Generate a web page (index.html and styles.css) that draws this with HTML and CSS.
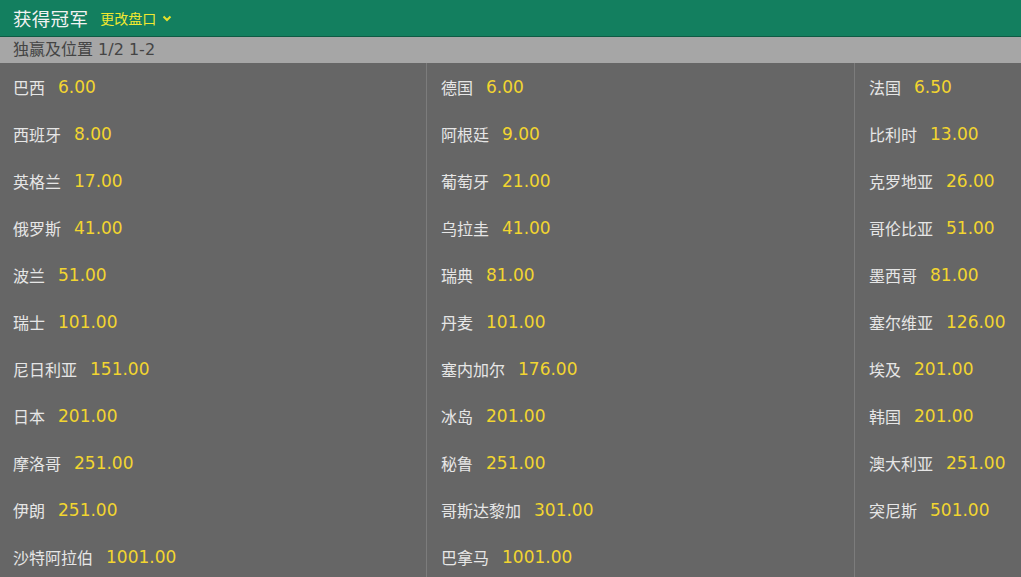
FILE: index.html
```html
<!DOCTYPE html>
<html lang="zh">
<head>
<meta charset="utf-8">
<link rel="stylesheet" href="styles.css">
</head>
<body>
<div class="header">
  <span class="title">获得冠军</span>
  <span class="change">更改盘口</span>
  <svg class="chev" width="10" height="7" viewBox="0 0 10 7"><path d="M1.5 1.5 L5 5 L8.5 1.5" fill="none" stroke="#e6e02a" stroke-width="2"/></svg>
</div>
<div class="sub">独赢及位置 1/2 1-2</div>
<div class="grid">
  <div class="col">
    <div class="row"><span class="name">巴西</span><span class="odds">6.00</span></div>
    <div class="row"><span class="name">西班牙</span><span class="odds">8.00</span></div>
    <div class="row"><span class="name">英格兰</span><span class="odds">17.00</span></div>
    <div class="row"><span class="name">俄罗斯</span><span class="odds">41.00</span></div>
    <div class="row"><span class="name">波兰</span><span class="odds">51.00</span></div>
    <div class="row"><span class="name">瑞士</span><span class="odds">101.00</span></div>
    <div class="row"><span class="name">尼日利亚</span><span class="odds">151.00</span></div>
    <div class="row"><span class="name">日本</span><span class="odds">201.00</span></div>
    <div class="row"><span class="name">摩洛哥</span><span class="odds">251.00</span></div>
    <div class="row"><span class="name">伊朗</span><span class="odds">251.00</span></div>
    <div class="row"><span class="name">沙特阿拉伯</span><span class="odds">1001.00</span></div>
  </div>
  <div class="col">
    <div class="row"><span class="name">德国</span><span class="odds">6.00</span></div>
    <div class="row"><span class="name">阿根廷</span><span class="odds">9.00</span></div>
    <div class="row"><span class="name">葡萄牙</span><span class="odds">21.00</span></div>
    <div class="row"><span class="name">乌拉圭</span><span class="odds">41.00</span></div>
    <div class="row"><span class="name">瑞典</span><span class="odds">81.00</span></div>
    <div class="row"><span class="name">丹麦</span><span class="odds">101.00</span></div>
    <div class="row"><span class="name">塞内加尔</span><span class="odds">176.00</span></div>
    <div class="row"><span class="name">冰岛</span><span class="odds">201.00</span></div>
    <div class="row"><span class="name">秘鲁</span><span class="odds">251.00</span></div>
    <div class="row"><span class="name">哥斯达黎加</span><span class="odds">301.00</span></div>
    <div class="row"><span class="name">巴拿马</span><span class="odds">1001.00</span></div>
  </div>
  <div class="col last">
    <div class="row"><span class="name">法国</span><span class="odds">6.50</span></div>
    <div class="row"><span class="name">比利时</span><span class="odds">13.00</span></div>
    <div class="row"><span class="name">克罗地亚</span><span class="odds">26.00</span></div>
    <div class="row"><span class="name">哥伦比亚</span><span class="odds">51.00</span></div>
    <div class="row"><span class="name">墨西哥</span><span class="odds">81.00</span></div>
    <div class="row"><span class="name">塞尔维亚</span><span class="odds">126.00</span></div>
    <div class="row"><span class="name">埃及</span><span class="odds">201.00</span></div>
    <div class="row"><span class="name">韩国</span><span class="odds">201.00</span></div>
    <div class="row"><span class="name">澳大利亚</span><span class="odds">251.00</span></div>
    <div class="row"><span class="name">突尼斯</span><span class="odds">501.00</span></div>
  </div>
</div>
</body>
</html>
```

FILE: styles.css
```css
html, body {
  margin: 0;
  padding: 0;
  background: #666666;
  overflow: hidden;
}
body {
  font-family: "DejaVu Sans", "Noto Sans CJK SC", sans-serif;
}
.header {
  background: #137f5f;
  border-bottom: 1px solid #0e5b44;
  display: flex;
  align-items: center;
  padding-left: 13px;
  box-sizing: border-box;
  height: 37px;
}
.title {
  font-family: "Noto Sans CJK SC", sans-serif;
  font-size: 18.5px;
  color: #f2f2f2;
  letter-spacing: 0.3px;
}
.change {
  font-family: "Noto Sans CJK SC", sans-serif;
  font-size: 14px;
  color: #f0e830;
  margin-left: 12px;
}
.chev {
  margin-left: 6px;
  margin-top: 1px;
}
.sub {
  height: 26px;
  background: #a6a6a6;
  color: #444444;
  font-family: "DejaVu Sans", "Noto Sans CJK SC", sans-serif;
  font-size: 16px;
  line-height: 26px;
  padding-left: 13px;
}
.grid {
  display: grid;
  grid-template-columns: 427px 428px 1fr;
}
.col {
  border-right: 1px solid #7c7c7c;
  padding-left: 13px;
  height: 520px;
  min-width: 0;
}
.col + .col {
  padding-left: 14px;
}
.col.last {
  border-right: none;
}
.row {
  height: 47px;
  display: flex;
  align-items: center;
}
.name {
  font-family: "Noto Sans CJK SC", sans-serif;
  font-size: 16px;
  color: #e6e6e6;
}
.odds {
  font-family: "DejaVu Sans", sans-serif;
  font-size: 17px;
  color: #f2d530;
  margin-left: 13px;
  padding-top: 1px;
}
```
